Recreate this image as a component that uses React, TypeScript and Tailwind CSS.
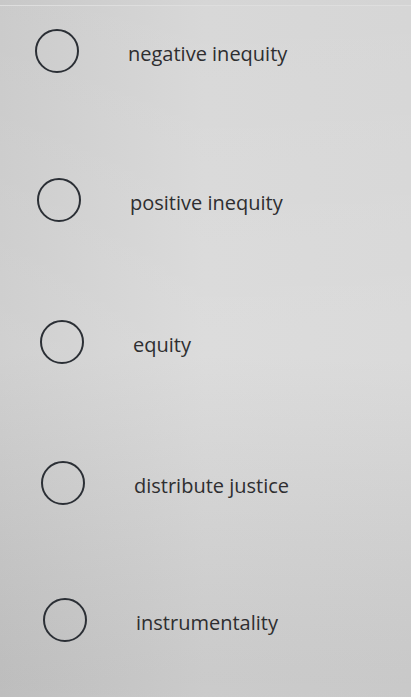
import React from 'react';

interface Choice {
  label: string;
  offset: string;
  spacing: string;
}

const choices: Choice[] = [
  { label: 'negative inequity', offset: 'pl-[35px]', spacing: 'mt-[23px]' },
  { label: 'positive inequity', offset: 'pl-[37px]', spacing: 'mt-[105px]' },
  { label: 'equity', offset: 'pl-[40px]', spacing: 'mt-[98px]' },
  { label: 'distribute justice', offset: 'pl-[41px]', spacing: 'mt-[97px]' },
  { label: 'instrumentality', offset: 'pl-[43px]', spacing: 'mt-[93px]' },
];

const RadioOption: React.FC<{ choice: Choice }> = ({ choice }) => (
  <label className={`flex items-center h-[44px] ${choice.offset} ${choice.spacing} cursor-pointer`}>
    <span className="block w-[44px] h-[44px] shrink-0 rounded-full border-2 border-[#2b2f35]" />
    <span className="ml-[49px] pt-[5px] text-[20px] leading-none text-[#2e2e30]">
      {choice.label}
    </span>
  </label>
);

export default function App() {
  return (
    <div
      className="min-h-[697px] w-full overflow-hidden bg-gradient-to-r from-[#c8c8c8] via-[#d6d6d6] to-[#d4d4d4]"
      style={{ fontFamily: '"Open Sans", Lato, sans-serif' }}
    >
      <div className="pt-[5px]">
        <div className="h-px bg-[#dedede]" />
      </div>
      <div className="flex flex-col pb-[56px] bg-gradient-to-b from-white/5 via-white/15 to-black/5">
        {choices.map((c) => (
          <RadioOption key={c.label} choice={c} />
        ))}
      </div>
    </div>
  );
}
